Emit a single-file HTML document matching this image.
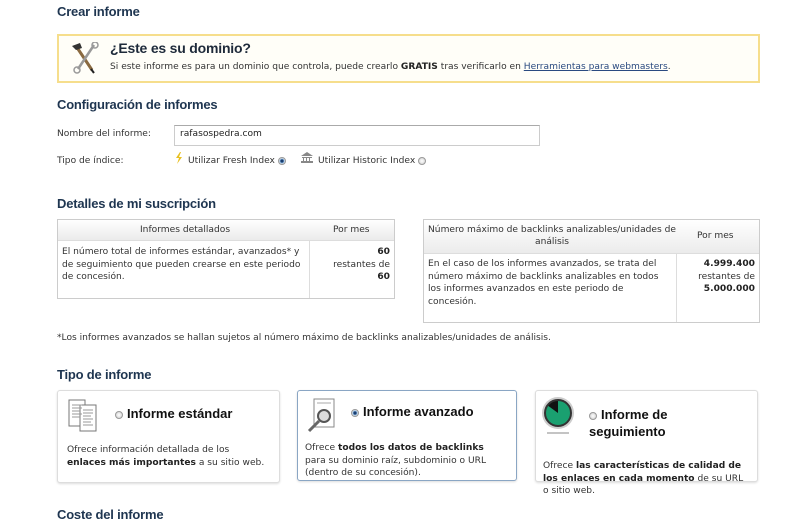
<!DOCTYPE html>
<html><head><meta charset="utf-8"><style>
*{margin:0;padding:0;box-sizing:border-box}
body{width:800px;height:516px;overflow:hidden;background:#fff;position:relative;font-family:"DejaVu Sans","Liberation Sans",sans-serif;font-size:9.1px;color:#333}
.a{position:absolute;white-space:nowrap}
h2{position:absolute;font-family:"Liberation Sans",sans-serif;font-size:13px;font-weight:bold;color:#1e3550;letter-spacing:-0.2px;white-space:nowrap}
.box{position:absolute;border:1px solid #ccc;background:#fff}
.th{position:absolute;background:linear-gradient(#fff,#ebebeb);border-bottom:1px solid #ddd;font-weight:normal;color:#222;text-align:center}
.radio{display:inline-block;width:8px;height:8px;border-radius:50%;border:1px solid #999;background:radial-gradient(#fff,#ccc);vertical-align:middle}
.radio.on{background:radial-gradient(#1a3d6e 30%,#7aa9d8 45%,#eee 70%)}
.card{position:absolute;border:1px solid #ddd;border-radius:3px;box-shadow:0 1px 2px #ddd;background:#fff}
.ct{position:absolute;font-family:"Liberation Sans",sans-serif;font-size:13px;font-weight:bold;color:#111;white-space:nowrap}
.cd{position:absolute;line-height:12.5px;white-space:nowrap}
b{color:#222}
</style></head><body>
<h2 style="left:57px;top:4px">Crear informe</h2>
<div style="position:absolute;left:57px;top:34px;width:703px;height:49px;border:2px solid #f6de8c;background:#fffef8"></div>
<svg class="a" style="left:70px;top:42px" width="30" height="32" viewBox="0 0 30 32">
<path d="M6 4 L22 28" stroke="#8a6a40" stroke-width="3"/>
<path d="M2 4 L10 1 L12 6 L6 8Z" fill="#333"/>
<path d="M24 3 L8 27" stroke="#999" stroke-width="2.5"/>
<circle cx="25" cy="3" r="3" fill="none" stroke="#999" stroke-width="1.5"/>
<circle cx="7" cy="28" r="3" fill="none" stroke="#999" stroke-width="1.5"/>
<path d="M21 27 L24 31" stroke="#222" stroke-width="2"/>
</svg>
<div class="a" style="left:110px;top:40px;font-family:'Liberation Sans',sans-serif;font-size:14px;font-weight:bold;color:#1e2a3a;letter-spacing:-0.2px">¿Este es su dominio?</div>
<div class="a" style="left:110px;top:62px">Si este informe es para un dominio que controla, puede crearlo <b>GRATIS</b> tras verificarlo en <span style="color:#2a4a80;text-decoration:underline">Herramientas para webmasters</span>.</div>

<h2 style="left:57px;top:97px">Configuración de informes</h2>
<div class="a" style="left:57px;top:129px">Nombre del informe:</div>
<div style="position:absolute;left:174px;top:125px;width:366px;height:21px;border:1px solid #ccc;border-top-color:#aaa"></div>
<div class="a" style="left:180px;top:129px;color:#222">rafasospedra.com</div>
<div class="a" style="left:57px;top:156px">Tipo de índice:</div>
<svg class="a" style="left:175px;top:152px" width="8" height="12"><path d="M5 0 L1 6 L4 6 L2 12 L7 5 L4 5 L6 0Z" fill="#e8c020"/></svg>
<div class="a" style="left:188px;top:156px">Utilizar Fresh Index <span class="radio on"></span></div>
<svg class="a" style="left:301px;top:152px" width="12" height="11"><path d="M0 4 L6 0 L12 4Z M1 5h10v1H1Z M2 6h1v3H2Z M5 6h1v3H5Z M8 6h1v3H8Z M0 9h12v2H0Z" fill="#888"/></svg>
<div class="a" style="left:318px;top:156px">Utilizar Historic Index <span class="radio"></span></div>

<h2 style="left:57px;top:196px">Detalles de mi suscripción</h2>
<div class="box" style="left:57px;top:219px;width:338px;height:80px"></div>
<div class="th" style="left:58px;top:220px;width:336px;height:21px"></div>
<div class="a" style="left:140px;top:225px">Informes detallados</div>
<div class="a" style="left:333px;top:225px">Por mes</div>
<div style="position:absolute;left:309px;top:241px;width:1px;height:57px;background:#ddd"></div>
<div class="cd" style="left:62px;top:246px">El número total de informes estándar, avanzados* y<br>de seguimiento que pueden crearse en este periodo<br>de concesión.</div>
<div class="cd" style="left:310px;top:246px;width:80px;text-align:right"><b>60</b><br>restantes de<br><b>60</b></div>

<div class="box" style="left:423px;top:219px;width:337px;height:104px"></div>
<div class="th" style="left:424px;top:220px;width:335px;height:34px"></div>
<div class="a" style="left:428px;top:224px;width:248px;text-align:center;white-space:normal;line-height:12px">Número máximo de backlinks analizables/unidades de análisis</div>
<div class="a" style="left:697px;top:231px">Por mes</div>
<div style="position:absolute;left:676px;top:254px;width:1px;height:68px;background:#ddd"></div>
<div class="cd" style="left:428px;top:258px">En el caso de los informes avanzados, se trata del<br>número máximo de backlinks analizables en todos<br>los informes avanzados en este periodo de<br>concesión.</div>
<div class="cd" style="left:677px;top:258px;width:78px;text-align:right"><b>4.999.400</b><br>restantes de<br><b>5.000.000</b></div>

<div class="a" style="left:57px;top:333px">*Los informes avanzados se hallan sujetos al número máximo de backlinks analizables/unidades de análisis.</div>

<h2 style="left:57px;top:367px">Tipo de informe</h2>
<div class="card" style="left:57px;top:390px;width:223px;height:93px"></div>
<svg class="a" style="left:68px;top:399px" width="32" height="34"><rect x="1" y="1" width="16" height="26" fill="#fff" stroke="#777"/><rect x="12" y="6" width="16" height="26" fill="#fff" stroke="#777"/><path d="M4 6h10M4 9h10M4 12h8M4 15h10M4 18h8M15 11h10M15 14h10M15 17h8M15 20h10M15 23h8M15 26h10" stroke="#999"/></svg>
<div class="ct" style="left:115px;top:406px"><span class="radio" style="margin-right:4px"></span>Informe estándar</div>
<div class="cd" style="left:67px;top:444px">Ofrece información detallada de los<br><b>enlaces más importantes</b> a su sitio web.</div>

<div class="card" style="left:297px;top:390px;width:220px;height:91px;border-color:#8aa6c4"></div>
<svg class="a" style="left:306px;top:398px" width="30" height="36"><rect x="8" y="1" width="20" height="28" fill="#fff" stroke="#888"/><path d="M11 5h14" stroke="#aaa"/><circle cx="18" cy="18" r="6" fill="#ddd" stroke="#555" stroke-width="2"/><path d="M13 23 L3 33" stroke="#666" stroke-width="3"/></svg>
<div class="ct" style="left:351px;top:404px"><span class="radio on" style="margin-right:4px"></span>Informe avanzado</div>
<div class="cd" style="left:305px;top:442px">Ofrece <b>todos los datos de backlinks</b><br>para su dominio raíz, subdominio o URL<br>(dentro de su concesión).</div>

<div class="card" style="left:535px;top:390px;width:223px;height:92px"></div>
<svg class="a" style="left:541px;top:396px" width="34" height="40"><circle cx="17" cy="17" r="16" fill="#ccc"/><circle cx="17" cy="17" r="13" fill="#1aa070"/><path d="M17 17 L6 9 A13 13 0 0 1 17 4Z" fill="#111"/><circle cx="17" cy="17" r="13" fill="none" stroke="#333" stroke-width="2"/><path d="M6 37h22" stroke="#888"/></svg>
<div class="ct" style="left:589px;top:406px;line-height:17px"><span class="radio" style="margin-right:4px"></span>Informe de<br>seguimiento</div>
<div class="cd" style="left:543px;top:460px">Ofrece <b>las características de calidad de<br>los enlaces en cada momento</b> de su URL<br>o sitio web.</div>

<h2 style="left:57px;top:507px">Coste del informe</h2>
</body></html>
